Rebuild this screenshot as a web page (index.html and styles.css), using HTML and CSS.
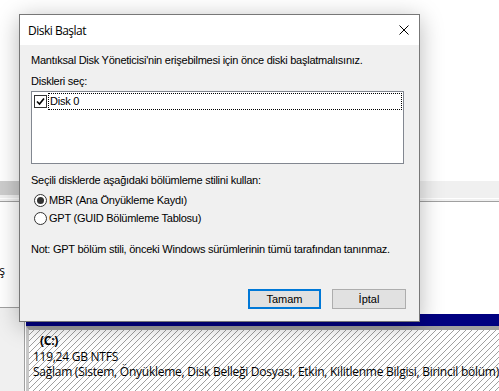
FILE: index.html
```html
<!DOCTYPE html>
<html>
<head>
  <title>Diski Başlat</title>
  <link rel="stylesheet" href="styles.css">
</head>
<body>
  <div class="app">
    <div class="top-pane"></div>
    <div class="hscroll">
      <div class="hscroll-thumb"></div>
    </div>
    <div class="splitter"></div>
    <div class="bottom-pane">
      <div class="legend">
        <div class="legend-disk1">
          <div class="legend-clip"><span>Başlatılmamış</span></div>
        </div>
        <div class="legend-disk0"></div>
      </div>
      <div class="volumes">
        <div class="disk1-area"></div>
        <div class="partition">
          <div class="partition-bar"></div>
          <div class="partition-body">
            <div class="part-name">(C:)</div>
            <div>119,24 GB NTFS</div>
            <div>Sağlam (Sistem, Önyükleme, Disk Belleği Dosyası, Etkin, Kilitlenme Bilgisi, Birincil bölüm)</div>
          </div>
        </div>
      </div>
    </div>
  </div>

  <div class="dialog">
    <div class="dialog-title">
      <span>Diski Başlat</span>
      <svg class="close-icon" width="10" height="10" viewBox="0 0 10 10">
        <path d="M0.5 0.5 L9.5 9.5 M9.5 0.5 L0.5 9.5" stroke="#000" stroke-width="1" fill="none"/>
      </svg>
    </div>
    <div class="dialog-body">
      <p class="line">Mantıksal Disk Yöneticisi'nin erişebilmesi için önce diski başlatmalısınız.</p>
      <p class="line disks-label">Diskleri seç:</p>
      <div class="disk-list">
        <div class="disk-item">
          <span class="checkbox">
            <svg width="9" height="9" viewBox="0 0 9 9">
              <path d="M1 4.5 L3.5 7 L8 1.5" stroke="#000" stroke-width="1.6" fill="none"/>
            </svg>
          </span>
          <span class="disk-name">Disk 0</span>
        </div>
      </div>
      <p class="line style-label">Seçili disklerde aşağıdaki bölümleme stilini kullan:</p>
      <div class="radio-group">
        <label class="radio-row"><span class="radio checked"></span>MBR (Ana Önyükleme Kaydı)</label>
        <label class="radio-row"><span class="radio"></span>GPT (GUID Bölümleme Tablosu)</label>
      </div>
      <p class="line note">Not: GPT bölüm stili, önceki Windows sürümlerinin tümü tarafından tanınmaz.</p>
      <div class="buttons">
        <button class="btn btn-default">Tamam</button>
        <button class="btn">İptal</button>
      </div>
    </div>
  </div>
</body>
</html>
```

FILE: styles.css
```css
body {
  margin: 0;
  width: 499px;
  height: 391px;
  overflow: hidden;
  background: #fff;
  font-family: 'Liberation Sans', Arial, sans-serif;
  color: #000;
}
.app {
  width: 499px;
  height: 391px;
  display: flex;
  flex-direction: column;
}
.top-pane {
  height: 181px;
  background: #fff;
}
.hscroll {
  height: 17px;
  background: #f0f0f0;
  display: flex;
}
.hscroll-thumb {
  width: 60px;
  margin: 0 0 3px 0;
  background: #cdcdcd;
}
.splitter {
  height: 4px;
  border-top: 1px solid #fff;
  border-bottom: 1px solid #a0a0a0;
  background: #f0f0f0;
  box-sizing: border-box;
}
.bottom-pane {
  flex: 1;
  display: flex;
}
.legend {
  width: 25px;
  border-right: 1px solid #a0a0a0;
  display: flex;
  flex-direction: column;
}
.legend-disk1 {
  height: 105px;
  border-bottom: 1px solid #a0a0a0;
  background: #fff;
  display: flex;
  align-items: center;
}
.legend-clip {
  width: 5px;
  overflow: hidden;
  display: flex;
  justify-content: flex-end;
  font-family: 'Open Sans', sans-serif;
  font-size: 12px;
  white-space: nowrap;
  margin-top: 32px;
}
.legend-disk0 {
  flex: 1;
  background: #f0f0f0;
}
.volumes {
  flex: 1;
  display: flex;
  flex-direction: column;
  padding-left: 1px;
}
.disk1-area {
  height: 112px;
  background: #fff;
}
.partition {
  flex: 1;
  display: flex;
  flex-direction: column;
}
.partition-bar {
  height: 12px;
  background: #000080;
}
.partition-body {
  flex: 1;
  border-top: 4px solid #a0a0a0;
  border-left: 3px solid #c8c8c8;
  padding: 3px 0 0 4px;
  background: repeating-linear-gradient(135deg, #fff 0 3.1px, #a0a0a0 3.1px 4.24px);
  font-family: 'Open Sans', sans-serif;
  font-size: 12px;
  line-height: 15.5px;
  white-space: nowrap;
  letter-spacing: -0.25px;
}
.part-name {
  font-weight: bold;
  padding-left: 7px;
}

/* dialog */
.dialog {
  position: absolute;
  left: 19px;
  top: 14px;
  width: 401px;
  height: 308px;
  box-sizing: border-box;
  border: 1px solid #777;
  background: #f0f0f0;
  box-shadow: 0 4px 22px rgba(0, 0, 0, 0.28);
  display: flex;
  flex-direction: column;
}
.dialog-title {
  height: 30px;
  background: #fff;
  display: flex;
  align-items: center;
  justify-content: space-between;
  padding: 0 10px 0 8px;
  font-family: 'Open Sans', sans-serif;
  font-size: 12px;
  letter-spacing: -0.5px;
}
.close-icon {
  display: block;
}
.dialog-body {
  flex: 1;
  padding: 9px 13px 0 11px;
  font-size: 11px;
  letter-spacing: -0.25px;
}
.line {
  margin: 0;
  line-height: 13px;
  white-space: nowrap;
}
.disks-label {
  margin-top: 8px;
}
.disk-list {
  margin-top: 3px;
  width: 373px;
  height: 73px;
  box-sizing: border-box;
  border: 1px solid #828790;
  background: #fff;
  padding: 1px 1px 0 2px;
}
.disk-item {
  display: flex;
  align-items: center;
  height: 17px;
}
.checkbox {
  width: 13px;
  height: 13px;
  box-sizing: border-box;
  border: 1px solid #333;
  background: #fff;
  display: flex;
  align-items: center;
  justify-content: center;
}
.checkbox svg {
  display: block;
}
.disk-name {
  flex: 1;
  margin-left: 1px;
  height: 17px;
  line-height: 15px;
  box-sizing: border-box;
  border: 1px dotted #000;
  padding-left: 1px;
}
.style-label {
  margin-top: 10px;
}
.radio-group {
  margin-top: 4px;
}
.radio-row {
  display: flex;
  align-items: center;
  height: 18px;
  padding-left: 3px;
}
.radio {
  width: 13px;
  height: 13px;
  box-sizing: border-box;
  border: 1px solid #333;
  border-radius: 50%;
  background: #fff;
  margin-right: 2px;
  display: flex;
  align-items: center;
  justify-content: center;
}
.radio.checked::after {
  content: '';
  width: 7px;
  height: 7px;
  border-radius: 50%;
  background: #333;
}
.note {
  margin-top: 16px;
}
.buttons {
  margin-top: 33px;
  display: flex;
  justify-content: flex-end;
  gap: 11px;
}
.btn {
  width: 74px;
  height: 20px;
  box-sizing: border-box;
  border: 1px solid #adadad;
  background: #e1e1e1;
  font-family: 'Liberation Sans', Arial, sans-serif;
  font-size: 11px;
  padding: 0;
  color: #000;
}
.btn-default {
  width: 73px;
  border: 2px solid #0078d7;
}
```
